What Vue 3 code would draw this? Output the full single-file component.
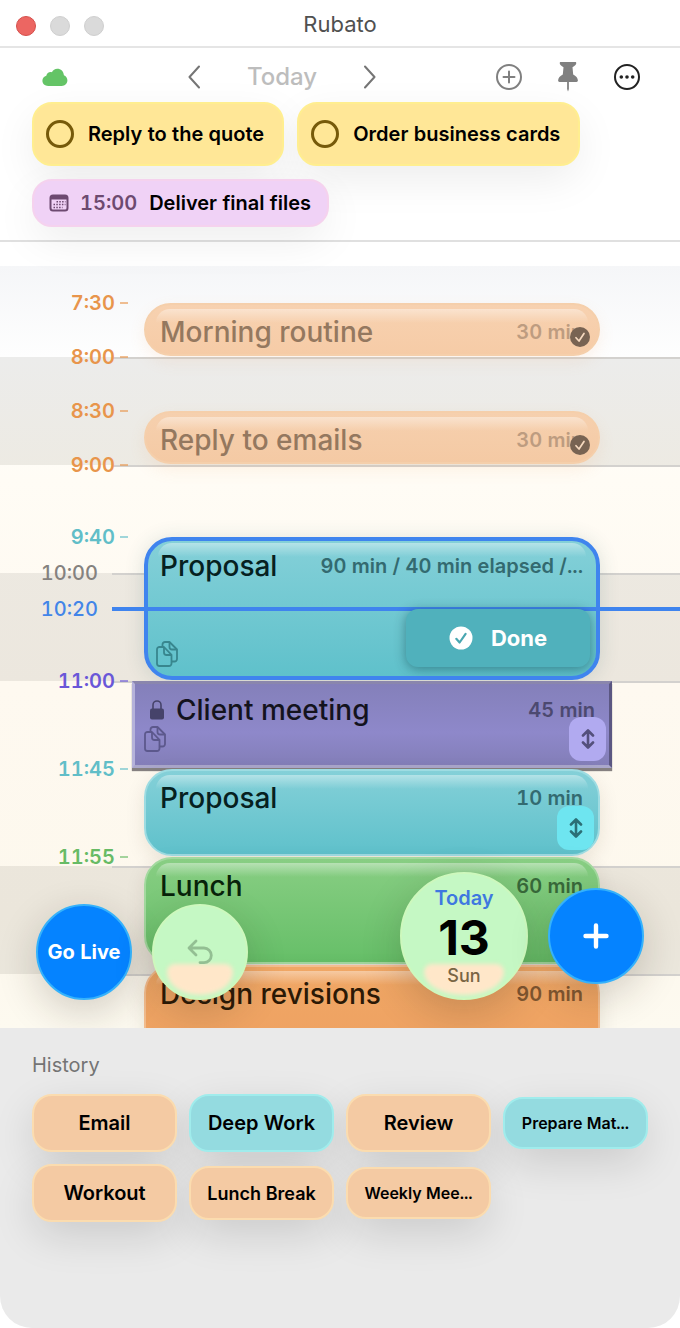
<script setup>
const todos = [
  { id: 'quote', text: 'Reply to the quote' },
  { id: 'cards', text: 'Order business cards' },
]

// Hour bands behind the schedule, top to bottom.
const bands = [
  { height: 91, dark: false },
  { height: 108, dark: true, line: true },
  { height: 108, dark: false, line: true },
  { height: 108, dark: true, line: true, label: '10:00' },
  { height: 185, dark: false, line: true },
  { height: 108, dark: true, line: true },
  { height: 54, dark: false, line: true },
]

const rows = [
  { time: '7:30', tone: 'orange', height: 54, event: { title: 'Morning routine', meta: '30 min', done: true } },
  { time: '8:00', tone: 'orange', height: 54 },
  { time: '8:30', tone: 'orange', height: 54, event: { title: 'Reply to emails', meta: '30 min', done: true } },
  { time: '9:00', tone: 'orange', height: 72 },
  { time: '9:40', tone: 'teal', height: 144, now: '10:20', event: { title: 'Proposal', meta: '90 min / 40 min elapsed /...', live: true, copy: true } },
  { time: '11:00', tone: 'purple', height: 88, event: { title: 'Client meeting', meta: '45 min', locked: true, copy: true, resize: true } },
  { time: '11:45', tone: 'teal', height: 88, event: { title: 'Proposal', meta: '10 min', resize: true } },
  { time: '11:55', tone: 'green', height: 108, event: { title: 'Lunch', meta: '60 min' } },
  { time: '', tone: 'orange', height: 108, event: { title: 'Design revisions', meta: '90 min' } },
]

const history = [
  { text: 'Email', tone: 'orange', size: 'large' },
  { text: 'Deep Work', tone: 'teal', size: 'large' },
  { text: 'Review', tone: 'orange', size: 'large' },
  { text: 'Prepare Mat...', tone: 'teal', size: 'small' },
  { text: 'Workout', tone: 'orange', size: 'large' },
  { text: 'Lunch Break', tone: 'orange', size: 'medium' },
  { text: 'Weekly Mee...', tone: 'orange', size: 'small' },
]
</script>

<template>
  <div class="window">
    <header class="titlebar">
      <div class="lights">
        <button class="light close" aria-label="Close"></button>
        <button class="light" aria-label="Minimize"></button>
        <button class="light" aria-label="Zoom"></button>
      </div>
      <h1>Rubato</h1>
    </header>

    <section class="top">
      <nav class="toolbar">
        <svg class="cloud" width="26" height="20" viewBox="0 0 26 20" role="img" aria-label="Synced">
          <path d="M6.200 19C2.800 19 .4 16.800 .4 13.800c0-2.500 1.600-4.500 3.900-5C4.700 6.400 6.500 5 8.600 5c.5 0 .9.050 1.300.2C11 3 12.900 1.700 15.200 1.700c3.700 0 6.500 2.700 6.700 6.500 2.100.8 3.500 2.700 3.500 5.100 0 3.200-2.400 5.700-5.700 5.700z" fill="#64c466" />
        </svg>
        <div class="days">
          <button aria-label="Previous day">
            <svg width="12" height="24" viewBox="0 0 12 24"><path d="M11 1.500 1.500 12 11 22.500" /></svg>
          </button>
          <span class="day">Today</span>
          <button aria-label="Next day">
            <svg width="12" height="24" viewBox="0 0 12 24"><path d="M1 1.500 10.500 12 1 22.500" /></svg>
          </button>
        </div>
        <div class="actions">
          <button aria-label="Add">
            <svg width="26" height="26" viewBox="0 0 26 26" fill="none" stroke="#808080" stroke-width="2" stroke-linecap="round">
              <circle cx="13" cy="13" r="12" /><path d="M13 7.500v11M7.500 13h11" />
            </svg>
          </button>
          <button aria-label="Pin window">
            <svg width="20" height="30" viewBox="0 0 20 30" fill="#808080">
              <path d="M2.700 0h14.600c.6 0 1 .5 1 1.100 0 1.700-1.600 3.200-3.800 4.200l.7 7.200c2.700 1.300 4.700 3.500 4.700 6 0 .8-.6 1.400-1.400 1.400H1.500c-.8 0-1.400-.6-1.400-1.400 0-2.500 2-4.700 4.700-6l.7-7.200C3.300 4.300 1.700 2.800 1.700 1.100 1.700.5 2.100 0 2.700 0z" />
              <path d="M9.100 19.500h1.800v7.500L10 29.500 9.100 27z" />
            </svg>
          </button>
          <button aria-label="More">
            <svg width="26" height="26" viewBox="0 0 26 26">
              <circle cx="13" cy="13" r="12" fill="none" stroke="#222" stroke-width="2" />
              <g fill="#222"><circle cx="7.300" cy="13" r="1.800" /><circle cx="13" cy="13" r="1.800" /><circle cx="18.700" cy="13" r="1.800" /></g>
            </svg>
          </button>
        </div>
      </nav>

      <div class="chips">
        <label v-for="todo in todos" :key="todo.id" class="chip todo" :for="todo.id">
          <input :id="todo.id" type="checkbox" />
          <span>{{ todo.text }}</span>
        </label>
        <button class="chip due">
          <svg width="20" height="18" viewBox="0 0 20 18">
            <rect x="1.500" y="1.500" width="17" height="15" rx="2.500" fill="none" stroke="#6d4a70" stroke-width="2" />
            <path d="M1 4a3 3 0 0 1 3-3h12a3 3 0 0 1 3 3v1.500H1z" fill="#6d4a70" />
            <path d="M7.500 7.800h9M4.500 10.600h12M4.500 13.400h9" stroke="#6d4a70" stroke-width="1.500" stroke-dasharray="1.500 1.300" fill="none" />
          </svg>
          <span class="due-time">15:00</span>
          <span>Deliver final files</span>
        </button>
      </div>
    </section>

    <main class="timeline">
      <div class="bands">
        <div v-for="(band, i) in bands" :key="i" class="band" :class="{ dark: band.dark, line: band.line }" :style="{ height: band.height + 'px' }">
          <time v-if="band.label" class="hour">{{ band.label }}</time>
        </div>
      </div>

      <div class="rows">
        <div v-for="(row, i) in rows" :key="i" class="row" :class="row.tone" :style="{ height: row.height + 'px' }">
          <time class="time">{{ row.time }}</time>
          <i class="tick" :class="{ hidden: !row.time }"></i>
          <div v-if="row.now" class="now">
            <time>{{ row.now }}</time>
            <i></i>
          </div>
          <article v-if="row.event" class="card" :class="{ past: row.event.done, live: row.event.live, locked: row.event.locked }">
            <div class="head">
              <svg v-if="row.event.locked" class="lock" width="14" height="20" viewBox="0 0 14 20">
                <rect y="8.500" width="14" height="11" rx="2" fill="#46436a" />
                <path d="M3 9V5a4 4 0 0 1 8 0v4" fill="none" stroke="#46436a" stroke-width="1.600" />
              </svg>
              <h2>{{ row.event.title }}</h2>
              <span class="meta">{{ row.event.meta }}</span>
            </div>
            <div class="foot">
              <svg v-if="row.event.copy" class="copy" width="22" height="26" viewBox="0 0 22 26" fill="none" stroke-width="1.800" stroke-linejoin="round">
                <path d="M6.500 5.500V3.500A2.500 2.500 0 0 1 9 1h4.500L21 8.500v9.500a2.500 2.500 0 0 1-2.500 2.500h-2.500" />
                <path d="M13.500 1v5A2.500 2.500 0 0 0 16 8.500h5" />
                <path d="M3.500 6H8l7.500 7.800V22.500A2.500 2.500 0 0 1 13 25H3.500A2.500 2.500 0 0 1 1 22.500v-14A2.500 2.500 0 0 1 3.500 6z" />
                <path d="M8 6v5.500a2.500 2.500 0 0 0 2.500 2.500h5" />
              </svg>
              <button v-if="row.event.live" class="done">
                <svg width="24" height="24" viewBox="0 0 24 24">
                  <circle cx="12" cy="12" r="11.500" fill="#fff" />
                  <path d="m7.300 12.800 3.300 3.700 6-8.700" fill="none" stroke="#4aa7b1" stroke-width="2.200" stroke-linecap="round" stroke-linejoin="round" />
                </svg>
                Done
              </button>
              <button v-if="row.event.resize" class="resize" aria-label="Adjust duration">
                <svg width="14" height="20" viewBox="0 0 14 20" fill="none" stroke-width="2.600" stroke-linecap="round" stroke-linejoin="round">
                  <path d="M7 2v16M2 6.500 7 1.500l5 5M2 13.500l5 5 5-5" />
                </svg>
              </button>
              <svg v-if="row.event.done" class="badge" width="20" height="20" viewBox="0 0 20 20" role="img" aria-label="Completed">
                <circle cx="10" cy="10" r="10" fill="#786352" />
                <path d="m6 10.700 3 3.300 5-7.500" fill="none" stroke="#f6d9bf" stroke-width="1.700" stroke-linecap="round" stroke-linejoin="round" />
              </svg>
            </div>
          </article>
        </div>
      </div>

      <div class="floating">
        <button class="round blue">Go Live</button>
        <button class="round glass" aria-label="Undo">
          <svg width="26" height="26" viewBox="0 0 26 26" fill="none" stroke="#93bf93" stroke-width="2.800" stroke-linecap="round" stroke-linejoin="round">
            <path d="M9 2 2 9l7 7M2.500 9H17a7.300 7.300 0 0 1 0 14.600h-4" />
          </svg>
        </button>
        <div class="float-right">
          <button class="round glass date">
            <span class="date-today">Today</span>
            <span class="date-number">13</span>
            <span class="date-day">Sun</span>
          </button>
          <button class="round blue" aria-label="New event">
            <svg width="26" height="26" viewBox="0 0 26 26" fill="none" stroke="#fff" stroke-width="4.400" stroke-linecap="round"><path d="M13 2.500v21M2.500 13h21" /></svg>
          </button>
        </div>
      </div>
    </main>

    <section class="history">
      <h3>History</h3>
      <div class="history-grid">
        <button v-for="item in history" :key="item.text" class="task" :class="[item.tone, item.size]">{{ item.text }}</button>
      </div>
    </section>
  </div>
</template>

<style>
body {
  background: #fff;
}
</style>

<style scoped>
.window {
  min-height: 100vh;
  display: flex;
  flex-direction: column;
  overflow: hidden;
  border-radius: 0 0 32px 32px;
  background: #fff;
  color: #000;
  font-family: Inter, "Liberation Sans", sans-serif;
  font-size: 20px;
  font-variant-numeric: tabular-nums;
}
button {
  margin: 0;
  padding: 0;
  border: 0;
  background: none;
  font: inherit;
  font-variant-numeric: inherit;
  color: inherit;
}
svg {
  display: block;
  flex: none;
}
h1, h2, h3 {
  margin: 0;
}

.titlebar {
  display: grid;
  grid-template-columns: 1fr auto 1fr;
  align-items: center;
  height: 46px;
  padding: 0 16px;
  border-bottom: 2px solid #e5e5e5;
}
.lights {
  display: flex;
  gap: 14px;
  padding-top: 6px;
}
.light {
  width: 20px;
  height: 20px;
  border: 1px solid #cfcfcf;
  border-radius: 50%;
  background: #dadada;
}
.close {
  border-color: #d5504c;
  background: #ec6662;
}
h1 {
  padding-top: 2px;
  font-size: 22px;
  line-height: 28px;
  font-weight: 400;
  color: #505050;
}

.top {
  padding: 0 32px 13px;
  border-bottom: 2px solid #e0e0e0;
}
.toolbar {
  display: flex;
  align-items: center;
  justify-content: space-between;
  height: 54px;
  padding: 4px 8px 0 10px;
  box-sizing: border-box;
}
.days {
  display: flex;
  align-items: center;
  gap: 47px;
  fill: none;
  stroke: #757575;
  stroke-width: 2;
  stroke-linecap: round;
  stroke-linejoin: round;
}
.day {
  font-size: 24px;
  line-height: 30px;
  font-weight: 500;
  color: #bdbdbd;
}
.actions {
  display: flex;
  align-items: center;
  gap: 36px;
}

.chips {
  display: flex;
  flex-wrap: wrap;
  gap: 13px;
  position: relative;
  z-index: 0;
}
.chip {
  position: relative;
  display: flex;
  align-items: center;
  box-sizing: border-box;
  border: 2px solid;
  border-radius: 20px;
  font-weight: 600;
  line-height: 28px;
}
.chip::before {
  content: "";
  position: absolute;
  z-index: -1;
  inset: 0;
  border-radius: inherit;
  box-shadow: 0 14px 44px rgba(0, 0, 0, 0.08);
}
.todo {
  gap: 14px;
  height: 64px;
  padding: 0 18px 0 12px;
  border-color: #ffee90;
  background: #ffe797;
}
.todo input {
  appearance: none;
  width: 28px;
  height: 28px;
  margin: 0;
  border: 3px solid #765a0a;
  border-radius: 50%;
}
.due {
  height: 48px;
  padding: 0 16px 0 15px;
  border-color: #f5d2ee;
  background: #f0d2f6;
}
.due-time {
  margin: 0 12px 0 11px;
  color: #6d4a70;
}

.timeline {
  display: grid;
  margin-top: 24px;
  overflow: hidden;
  background: linear-gradient(#f5f6f8, #fefefe 12%, #fffcf5 28%, #fef9f0 55%, #fdf8ed 85%, #fdfaf0);
}
.bands, .rows, .floating {
  grid-area: 1 / 1;
  min-width: 0;
}
.band {
  display: flex;
  align-items: flex-start;
}
.dark {
  background-color: rgba(30, 20, 10, 0.08);
}
.line {
  background-image: linear-gradient(#d3d1ce, #d3d1ce);
  background-repeat: no-repeat;
  background-position: 112px 0;
  background-size: 100% 2px;
}
.hour {
  width: 98px;
  margin-top: -12px;
  line-height: 24px;
  font-weight: 500;
  text-align: right;
  color: #85827f;
}
.rows {
  height: 0;
  padding-top: 37px;
}
.row {
  position: relative;
  display: grid;
  grid-template-columns: 115px 8px minmax(0, 1fr);
  column-gap: 5px;
  padding-right: 80px;
}
.time {
  margin-top: -12px;
  height: 24px;
  line-height: 24px;
  font-weight: 600;
  text-align: right;
  color: var(--ink);
}
.tick {
  height: 2px;
  margin-top: -1px;
  background: var(--ink);
  opacity: 0.6;
}
.hidden {
  visibility: hidden;
}
.row.orange { --ink: #e8954b; --a: #f0a765; --b: #eea061; --edge: #f3bd8e; --text: #2b1906; --sub: #7f5630; }
.row.teal { --ink: #61bec8; --a: #84d0d8; --b: #5fc1cb; --edge: #9edce2; --text: #06211f; --sub: #336a70; --handle: #6ee5f0; --handle-ink: #2c6f76; }
.row.purple { --ink: #6a57d8; --text: #14131d; --sub: #4c4970; --handle: #b1aaf0; --handle-ink: #54507c; }
.row.green { --ink: #67bb65; --a: #88ce83; --b: #66bf68; --edge: #a3d99f; --text: #08230a; --sub: #38693a; }

.card {
  position: relative;
  grid-column: 3;
  display: grid;
  margin: 0 0 1px 11px;
  box-sizing: border-box;
  overflow: hidden;
  border: 2px solid var(--edge);
  border-radius: 28px;
  background: linear-gradient(var(--a), var(--b));
  box-shadow: 0 6px 20px rgba(60, 40, 20, 0.1);
}
.card::before {
  content: "";
  position: absolute;
  top: 4px;
  left: 10px;
  right: 10px;
  height: 20px;
  border-radius: 14px 14px 0 0;
  background: linear-gradient(rgba(255, 255, 255, 0.4), rgba(255, 255, 255, 0) 14px);
}
.past {
  border-color: #f5cfab;
  background: linear-gradient(rgba(247, 205, 168, 0.9), rgba(245, 198, 157, 0.9));
  box-shadow: 0 6px 16px rgba(240, 160, 90, 0.12);
  --text: #94785f;
  --sub: #bd9c80;
}
.live {
  border: 4px solid #3f84ee;
  box-shadow: 0 2px 20px rgba(40, 90, 90, 0.16);
}
.live::before {
  top: 2px;
}
.locked {
  margin-left: -1px;
  margin-right: -12px;
  border: 3px solid;
  border-color: #8a86ad #5b5782 #aaa7cb #b5b2da;
  border-radius: 0;
  background: linear-gradient(#8480ba, #8e88ca 60%, #837eb8);
  box-shadow: 0 3px 1px #858080;
}
.locked::before {
  display: none;
}
.head, .foot {
  grid-area: 1 / 1;
  position: relative;
  display: flex;
}
.head {
  align-items: center;
  height: 32px;
  padding: 11px 15px 0 14px;
}
.live .head {
  padding: 9px 13px 0 12px;
}
.locked .head {
  padding: 10px 14px 0 15px;
}
.lock {
  margin-right: 12px;
}
h2 {
  font-size: 28px;
  line-height: 32px;
  font-weight: 500;
  white-space: nowrap;
  color: var(--text);
}
.meta {
  margin-left: auto;
  line-height: 28px;
  font-weight: 600;
  white-space: nowrap;
  color: var(--sub);
}
.foot {
  align-self: end;
  align-items: center;
  padding: 0 4px 4px 9px;
}
.copy {
  stroke: #38868e;
}
.locked .foot {
  padding: 0 3px 4px 9px;
}
.locked .copy {
  stroke: #5c588c;
}
.live .foot {
  align-items: flex-end;
  padding: 0 6px 9px 8px;
}
.done {
  position: relative;
  z-index: 2;
  display: flex;
  align-items: center;
  justify-content: center;
  gap: 18px;
  width: 184px;
  height: 58px;
  margin-left: auto;
  border-radius: 12px;
  background: #50b1bc;
  box-shadow: 0 2px 12px rgba(0, 50, 60, 0.45);
  font-size: 22px;
  font-weight: 700;
  color: #fff;
}
.resize {
  display: grid;
  place-items: center;
  width: 37px;
  height: 44px;
  margin-left: auto;
  border-radius: 12px;
  background: var(--handle);
  stroke: var(--handle-ink);
}
.badge {
  margin: 0 4px 3px auto;
}
.now {
  position: absolute;
  z-index: 1;
  top: 50%;
  left: 0;
  right: 0;
  display: flex;
  align-items: center;
  gap: 14px;
  height: 24px;
  margin-top: -12px;
  line-height: 24px;
  font-weight: 500;
  color: #4285e8;
}
.now time {
  width: 98px;
  text-align: right;
}
.now i {
  flex: 1;
  height: 4px;
  background: #3f84ee;
}

.floating {
  z-index: 3;
  display: flex;
  align-items: flex-end;
  gap: 20px;
  padding: 0 36px 28px;
}
.float-right {
  display: flex;
  align-items: center;
  gap: 20px;
  margin-left: auto;
}
.round {
  position: relative;
  display: flex;
  align-items: center;
  justify-content: center;
  flex: none;
  width: 96px;
  height: 96px;
  box-sizing: border-box;
  border-radius: 50%;
  box-shadow: 0 12px 40px rgba(40, 30, 20, 0.2);
}
.blue {
  border: 2px solid #35b2fb;
  background: #0583ff;
  color: #fff;
  font-weight: 700;
}
.glass {
  border: 2px solid #cdf8bd;
  background: #c5f8c4;
}
.glass::before {
  content: "";
  position: absolute;
  bottom: 3px;
  left: 14%;
  right: 14%;
  height: 31px;
  border-radius: 8px 8px 50% 50% / 8px 8px 23px 23px;
  background: #ffe7c9;
  filter: blur(2px);
}
.glass > * {
  position: relative;
}
.date {
  flex-direction: column;
  width: 128px;
  height: 128px;
}
.date::before {
  left: 18%;
  right: 18%;
}
.date-today {
  line-height: 24px;
  font-weight: 600;
  color: #3f78e0;
}
.date-number {
  font-size: 48px;
  line-height: 56px;
  font-weight: 700;
  font-variant-numeric: normal;
}
.date-day {
  font-size: 18px;
  line-height: 20px;
  font-weight: 500;
  color: #7a6544;
}

.history {
  flex: 1;
  padding: 23px 32px 104px;
  background: #eaeaea;
}
h3 {
  font-size: 20px;
  line-height: 28px;
  font-weight: 400;
  color: #747474;
}
.history-grid {
  position: relative;
  z-index: 0;
  display: grid;
  grid-template-columns: repeat(4, minmax(0, 1fr));
  grid-auto-rows: 58px;
  gap: 12px;
  align-items: center;
  margin-top: 15px;
}
.task {
  position: relative;
  height: 58px;
  border: 2px solid;
  border-radius: 20px;
  font-weight: 600;
  white-space: nowrap;
}
.task::before {
  content: "";
  position: absolute;
  z-index: -1;
  inset: 0;
  border-radius: inherit;
  box-shadow: 0 14px 44px rgba(0, 0, 0, 0.14);
}
.task.medium {
  height: 54px;
  font-size: 18px;
}
.task.small {
  height: 52px;
  font-size: 16px;
}
.task.orange {
  border-color: #fbdcaf;
  background: #f4caa3;
}
.task.teal {
  border-color: #a0ecec;
  background: #94dbe0;
}
</style>
